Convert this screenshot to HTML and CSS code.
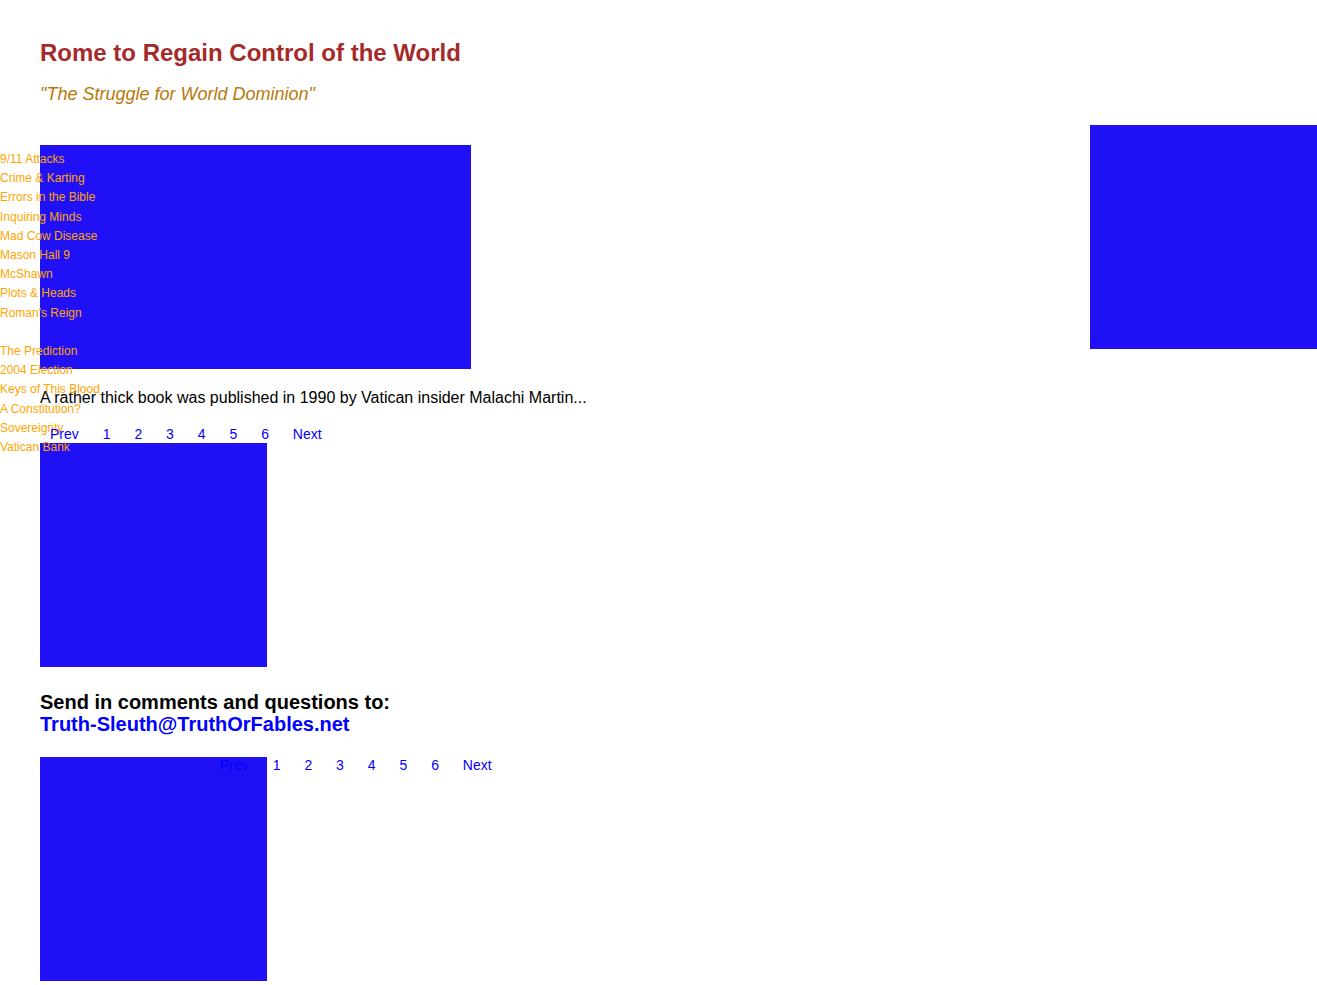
FILE: index.html
```html
<!DOCTYPE html>
<html>
<head>
<meta charset="utf-8">
<title>Rome to Regain Control of the World</title>
<link rel="stylesheet" href="styles.css">
</head>
<body>
<nav class="sidenav">
  <a href="#">9/11 Attacks</a>
  <a href="#">Crime &amp; Karting</a>
  <a href="#">Errors in the Bible</a>
  <a href="#">Inquiring Minds</a>
  <a href="#">Mad Cow Disease</a>
  <a href="#">Mason Hall 9</a>
  <a href="#">McShawn</a>
  <a href="#">Plots &amp; Heads</a>
  <a href="#">Roman's Reign</a>
  <span class="gap"></span>
  <a href="#">The Prediction</a>
  <a href="#">2004 Election</a>
  <a href="#">Keys of This Blood</a>
  <a href="#">A Constitution?</a>
  <a href="#">Sovereignty</a>
  <a href="#">Vatican Bank</a>
</nav>
<main class="main">
  <h1 class="title">Rome to Regain Control of the World</h1>
  <h2 class="subtitle">"The Struggle for World Dominion"</h2>
  <div class="imgrow">
    <div class="ph ph-wide"></div>
    <div class="ph ph-side"></div>
  </div>
  <p class="intro">A rather thick book was published in 1990 by Vatican insider Malachi Martin...</p>
  <div class="pager">
    <a href="#">Prev</a> <a href="#">1</a> <a href="#">2</a> <a href="#">3</a> <a href="#">4</a> <a href="#">5</a> <a href="#">6</a> <a href="#">Next</a>
  </div>
  <div class="ph ph-sq"></div>
  <div class="contact">
    <div class="contact-label">Send in comments and questions to:</div>
    <a class="contact-mail" href="#">Truth-Sleuth@TruthOrFables.net</a>
  </div>
  <div class="stack">
    <div class="ph ph-sq"></div>
    <div class="pager pager-over">
      <a href="#">Prev</a> <a href="#">1</a> <a href="#">2</a> <a href="#">3</a> <a href="#">4</a> <a href="#">5</a> <a href="#">6</a> <a href="#">Next</a>
    </div>
  </div>
</main>
</body>
</html>
```

FILE: styles.css
```css
html, body {
  margin: 0;
  padding: 0;
  background: #ffffff;
}
body {
  font-family: "Liberation Sans", Arial, sans-serif;
  color: #000000;
  position: relative;
}
.sidenav {
  position: absolute;
  left: 0;
  top: 150px;
  display: flex;
  flex-direction: column;
  font-size: 12px;
  line-height: 19.2px;
  z-index: 2;
}
.sidenav a {
  color: #ffa500;
  text-decoration: none;
}
.sidenav .gap {
  height: 19.2px;
}
.main {
  padding: 39px 0 0 40px;
}
.title {
  margin: 0;
  font-size: 24px;
  line-height: 28px;
  font-weight: bold;
  color: #a52a2a;
}
.subtitle {
  margin: 16px 0 0;
  font-size: 18px;
  line-height: 22px;
  font-weight: normal;
  font-style: italic;
  color: #b8780b;
}
.imgrow {
  margin-top: 20px;
  display: flex;
  justify-content: space-between;
  align-items: flex-start;
}
.ph {
  background: #1f10f5;
}
.ph-wide {
  width: 431px;
  height: 224px;
  margin-top: 20px;
}
.ph-side {
  width: 227px;
  height: 224px;
}
.ph-sq {
  width: 227px;
  height: 224px;
}
.intro {
  margin: 20px 0 0;
  font-size: 16px;
  line-height: 18px;
}
.pager {
  position: relative;
  z-index: 3;
  margin-top: 19px;
  font-size: 14px;
  line-height: 17px;
  height: 17px;
}
.pager a {
  color: #0000ff;
  text-decoration: none;
  padding: 0 10px;
}
.contact {
  margin-top: 24px;
  font-size: 20px;
  line-height: 22px;
  font-weight: bold;
}
.contact-mail {
  color: #0000ff;
  text-decoration: none;
}
.stack {
  margin-top: 22px;
  display: grid;
}
.stack > * {
  grid-area: 1 / 1;
}
.pager-over {
  margin: 0 0 0 170px;
  line-height: 16px;
  height: 16px;
}
```
